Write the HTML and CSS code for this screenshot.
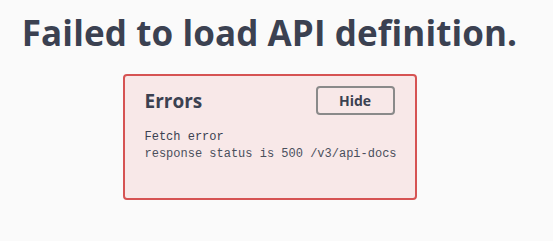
FILE: index.html
```html
<!DOCTYPE html>
<html>
<head>
<meta charset="utf-8">
<link rel="stylesheet" href="styles.css">
</head>
<body>
<div class="page">
  <h1 class="title">Failed to load API definition.</h1>
  <div class="errors">
    <div class="errors-head">
      <h4 class="errors-title">Errors</h4>
      <button class="hide-btn">Hide</button>
    </div>
    <div class="error-item">
      <div class="error-name">Fetch error</div>
      <div class="error-msg">response status is 500 /v3/api-docs</div>
    </div>
  </div>
</div>
</body>
</html>
```

FILE: styles.css
```css
html, body {
  margin: 0;
  padding: 0;
  background: #fafafa;
}
body {
  width: 553px;
  height: 241px;
  overflow: hidden;
  font-family: "Open Sans", "Noto Sans CJK KR", sans-serif;
  color: #3b4151;
}
.page {
  width: 539px;
  display: flex;
  flex-direction: column;
  align-items: center;
}
.title {
  margin: 8px 0 0;
  font-size: 35px;
  font-weight: 700;
  line-height: 50px;
  letter-spacing: 0.1px;
  color: #3b4151;
  white-space: nowrap;
}
.errors {
  box-sizing: border-box;
  margin-top: 16px;
  width: 294px;
  height: 126px;
  background: #f8e8e8;
  border: 2px solid #d65353;
  border-radius: 4px;
  padding: 10px 20px 10px 20px;
}
.errors-head {
  display: flex;
  justify-content: space-between;
  align-items: center;
}
.errors-title {
  margin: 0;
  font-size: 19px;
  font-weight: 700;
  line-height: 28px;
  color: #3b4151;
}
.hide-btn {
  box-sizing: border-box;
  width: 79px;
  height: 29px;
  background: transparent;
  border: 2px solid #8a8a8a;
  border-radius: 4px;
  font-family: "Open Sans", sans-serif;
  font-size: 14px;
  font-weight: 700;
  color: #3b4151;
  padding: 0;
}
.error-item {
  margin-top: 14px;
  font-family: "Liberation Mono", monospace;
  font-size: 12px;
  line-height: 17px;
  color: #3b4151;
  white-space: nowrap;
}
.error-msg {
  color: #4a4f5c;
}
```
